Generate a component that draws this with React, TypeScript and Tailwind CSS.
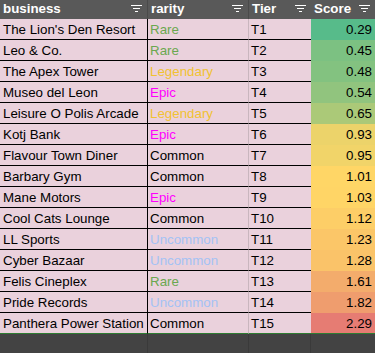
import React from "react";

type Rarity = "Rare" | "Legendary" | "Epic" | "Common" | "Uncommon";

const rarityColor: Record<Rarity, string> = {
  Rare: "text-[#6aa84f]",
  Legendary: "text-[#f1c232]",
  Epic: "text-[#ff00ff]",
  Common: "text-black",
  Uncommon: "text-[#a4c2f4]",
};

// score colours precomputed from the sheet's green → yellow → red scale
const rows: { name: string; rarity: Rarity; tier: string; score: string; bg: string }[] = [
  { name: "The Lion's Den Resort", rarity: "Rare", tier: "T1", score: "0.29", bg: "bg-[#57bb8a]" },
  { name: "Leo & Co.", rarity: "Rare", tier: "T2", score: "0.45", bg: "bg-[#7cc182]" },
  { name: "The Apex Tower", rarity: "Legendary", tier: "T3", score: "0.48", bg: "bg-[#83c280]" },
  { name: "Museo del Leon", rarity: "Epic", tier: "T4", score: "0.54", bg: "bg-[#91c47e]" },
  { name: "Leisure O Polis Arcade", rarity: "Legendary", tier: "T5", score: "0.65", bg: "bg-[#abc978]" },
  { name: "Kotj Bank", rarity: "Epic", tier: "T6", score: "0.93", bg: "bg-[#ecd36a]" },
  { name: "Flavour Town Diner", rarity: "Common", tier: "T7", score: "0.95", bg: "bg-[#f1d469]" },
  { name: "Barbary Gym", rarity: "Common", tier: "T8", score: "1.01", bg: "bg-[#ffd666]" },
  { name: "Mane Motors", rarity: "Epic", tier: "T9", score: "1.03", bg: "bg-[#ffd566]" },
  { name: "Cool Cats Lounge", rarity: "Common", tier: "T10", score: "1.12", bg: "bg-[#fdce67]" },
  { name: "LL Sports", rarity: "Uncommon", tier: "T11", score: "1.23", bg: "bg-[#fbc668]" },
  { name: "Cyber Bazaar", rarity: "Uncommon", tier: "T12", score: "1.28", bg: "bg-[#fac369]" },
  { name: "Felis Cineplex", rarity: "Rare", tier: "T13", score: "1.61", bg: "bg-[#f3ac6c]" },
  { name: "Pride Records", rarity: "Uncommon", tier: "T14", score: "1.82", bg: "bg-[#ef9d6e]" },
  { name: "Panthera Power Station", rarity: "Common", tier: "T15", score: "2.29", bg: "bg-[#e67c73]" },
];

const FilterIcon = () => (
  <svg width="11" height="7" viewBox="0 0 11 7" className="shrink-0 mb-[2px]">
    <rect x="0" y="0" width="11" height="1" fill="#fff" />
    <rect x="2" y="3" width="7" height="1" fill="#fff" />
    <rect x="4" y="6" width="3" height="1" fill="#fff" />
  </svg>
);

const HeaderCell = ({ label, className }: { label: string; className: string }) => (
  <div className={`flex items-center justify-between h-[19px] pl-[3px] pr-[5px] ${className}`}>
    <span className="font-bold text-white leading-[15px] mb-[2px]">{label}</span>
    <FilterIcon />
  </div>
);

export default function App() {
  return (
    <div
      className="min-h-screen w-[375px] bg-[#434343] text-[13.33px] text-black"
      style={{ fontFamily: '"Liberation Sans", Arial, sans-serif' }}
    >
      {/* header */}
      <div className="grid grid-cols-[148px_101px_62px_64px] bg-[#595959]">
        <HeaderCell label="business" className="border-r border-[#4a4a4a]" />
        <HeaderCell label="rarity" className="border-r border-[#4a4a4a]" />
        <HeaderCell label="Tier" className="" />
        <HeaderCell label="Score" className="" />
      </div>

      {rows.map((r, i) => (
        <div key={r.tier} className="grid grid-cols-[148px_101px_62px_64px] leading-[15px]">
          <div
            className={`flex items-center h-[21px] pl-[3px] bg-[#ead1dc] border-r border-b border-r-black ${
              i === rows.length - 1 ? "border-b-[#2e7d32]" : "border-b-black"
            } whitespace-nowrap`}
          >
            {r.name}
          </div>
          <div
            className={`flex items-center h-[21px] pl-[2px] bg-[#ead1dc] border-r border-b border-r-[#c9b6be] ${
              i === rows.length - 1 ? "border-b-[#2e7d32]" : "border-b-black"
            } ${rarityColor[r.rarity]}`}
          >
            {r.rarity}
          </div>
          <div
            className={`flex items-center h-[21px] pl-[2px] bg-[#ead1dc] border-b ${
              i === rows.length - 1 ? "border-b-[#2e7d32]" : "border-b-black"
            }`}
          >
            {r.tier}
          </div>
          <div
            className={`flex items-center justify-end h-[21px] pr-[3px] ${r.bg} ${
              i === rows.length - 1 ? "border-b border-b-[#2e7d32]" : ""
            }`}
          >
            {r.score}
          </div>
        </div>
      ))}

      {/* empty rows below the data */}
      <div className="grid grid-cols-[148px_101px_62px_64px] h-[20px]">
        <div className="border-r border-[#3a3a3a]" />
        <div className="border-r border-[#3a3a3a]" />
        <div className="border-r border-[#3a3a3a]" />
        <div />
      </div>
    </div>
  );
}
